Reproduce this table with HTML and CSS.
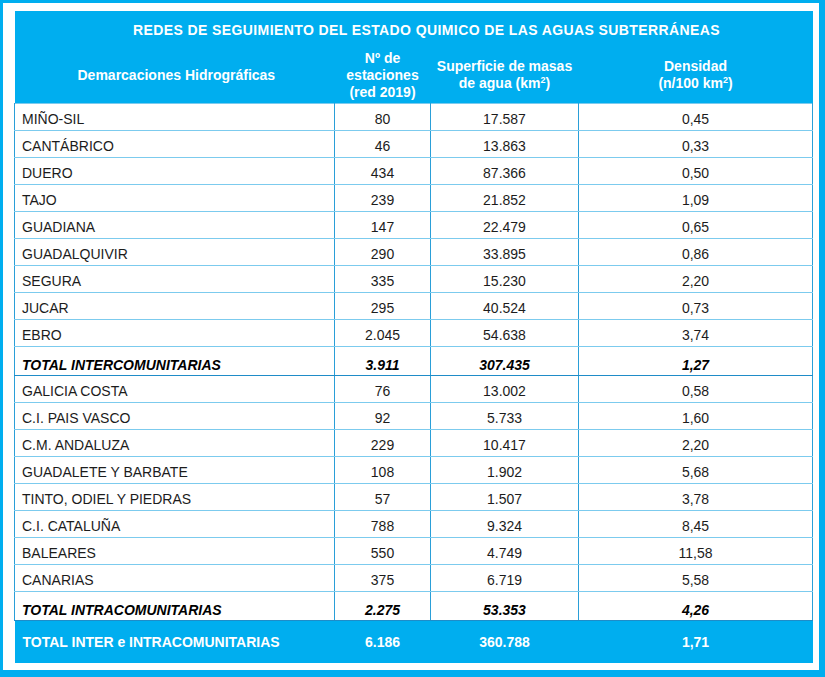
FILE: index.html
```html
<!DOCTYPE html>
<html lang="es">
<head>
<meta charset="utf-8">
<title>Redes de seguimiento</title>
<link rel="stylesheet" href="styles.css">
</head>
<body>
<div class="frame">
<table class="grid">
  <colgroup>
    <col class="c1"><col class="c2"><col class="c3"><col class="c4">
  </colgroup>
  <thead>
    <tr class="title-row"><th colspan="4">REDES DE SEGUIMIENTO DEL ESTADO QUIMICO DE LAS AGUAS SUBTERRÁNEAS</th></tr>
    <tr class="head-row">
      <th>Demarcaciones Hidrográficas</th>
      <th>Nº de<br>estaciones<br>(red 2019)</th>
      <th>Superficie de masas<br>de agua (km<sup>2</sup>)</th>
      <th>Densidad<br>(n/100 km<sup>2</sup>)</th>
    </tr>
  </thead>
  <tbody>
    <tr><td>MIÑO-SIL</td><td>80</td><td>17.587</td><td>0,45</td></tr>
    <tr><td>CANTÁBRICO</td><td>46</td><td>13.863</td><td>0,33</td></tr>
    <tr><td>DUERO</td><td>434</td><td>87.366</td><td>0,50</td></tr>
    <tr><td>TAJO</td><td>239</td><td>21.852</td><td>1,09</td></tr>
    <tr><td>GUADIANA</td><td>147</td><td>22.479</td><td>0,65</td></tr>
    <tr><td>GUADALQUIVIR</td><td>290</td><td>33.895</td><td>0,86</td></tr>
    <tr><td>SEGURA</td><td>335</td><td>15.230</td><td>2,20</td></tr>
    <tr><td>JUCAR</td><td>295</td><td>40.524</td><td>0,73</td></tr>
    <tr><td>EBRO</td><td>2.045</td><td>54.638</td><td>3,74</td></tr>
    <tr class="total"><td>TOTAL INTERCOMUNITARIAS</td><td>3.911</td><td>307.435</td><td>1,27</td></tr>
    <tr><td>GALICIA COSTA</td><td>76</td><td>13.002</td><td>0,58</td></tr>
    <tr><td>C.I. PAIS VASCO</td><td>92</td><td>5.733</td><td>1,60</td></tr>
    <tr><td>C.M. ANDALUZA</td><td>229</td><td>10.417</td><td>2,20</td></tr>
    <tr><td>GUADALETE Y BARBATE</td><td>108</td><td>1.902</td><td>5,68</td></tr>
    <tr><td>TINTO, ODIEL Y PIEDRAS</td><td>57</td><td>1.507</td><td>3,78</td></tr>
    <tr><td>C.I. CATALUÑA</td><td>788</td><td>9.324</td><td>8,45</td></tr>
    <tr><td>BALEARES</td><td>550</td><td>4.749</td><td>11,58</td></tr>
    <tr><td>CANARIAS</td><td>375</td><td>6.719</td><td>5,58</td></tr>
    <tr class="total"><td>TOTAL INTRACOMUNITARIAS</td><td>2.275</td><td>53.353</td><td>4,26</td></tr>
  </tbody>
  <tfoot>
    <tr class="grand"><td>TOTAL INTER e INTRACOMUNITARIAS</td><td>6.186</td><td>360.788</td><td>1,71</td></tr>
  </tfoot>
</table>
</div>
</body>
</html>
```
FILE: styles.css
```css
html, body {
  margin: 0;
  padding: 0;
  background: #ffffff;
}

.frame {
  box-sizing: border-box;
  width: 825px;
  height: 677px;
  border-style: solid;
  border-color: #00aeef;
  border-width: 3px 6px 7px 3px;
  padding: 8px 7px 7px 11px;
  background: #ffffff;
  font-family: "Liberation Sans", Arial, sans-serif;
  overflow: hidden;
}

.grid {
  width: 798px;
  border-collapse: collapse;
  table-layout: fixed;
  font-size: 14px;
  color: #1c1c1c;
}

.c1 { width: 320px; }
.c2 { width: 96px; }
.c3 { width: 148px; }
.c4 { width: 234px; }

thead th {
  background: #00aeef;
  color: #ffffff;
  font-weight: bold;
  padding: 0;
  line-height: 17px;
  text-align: center;
}

.title-row th {
  height: 34px;
  padding-top: 2px;
  padding-left: 26px;
  vertical-align: middle;
  letter-spacing: 0.4px;
}

.head-row th {
  height: 56px;
  vertical-align: middle;
}

.head-row th:first-child {
  text-align: left;
  padding-left: 63px;
}

sup {
  font-size: 9px;
  line-height: 0;
  vertical-align: 5px;
}

tbody td {
  height: 23px;
  padding: 0 0 3px 0;
  line-height: 16px;
  vertical-align: bottom;
  text-align: center;
  border-left: 1px solid #2a9fd8;
  border-right: 1px solid #2a9fd8;
  border-top: 1px solid #7ccbee;
  border-bottom: 1px solid #7ccbee;
}

tbody td:first-child {
  text-align: left;
  padding-left: 7px;
}

tbody tr.total td {
  height: 26px;
  font-weight: bold;
  font-style: italic;
  color: #000000;
  padding-bottom: 2px;
  border-top: 1px solid #1f8cc8;
  border-bottom: 1px solid #1f8cc8;
}

.grand td {
  background: #00aeef;
  color: #ffffff;
  font-weight: bold;
  height: 42px;
  padding: 0;
  text-align: center;
  vertical-align: middle;
}

.grand td:first-child {
  text-align: left;
  padding-left: 8px;
}
```
